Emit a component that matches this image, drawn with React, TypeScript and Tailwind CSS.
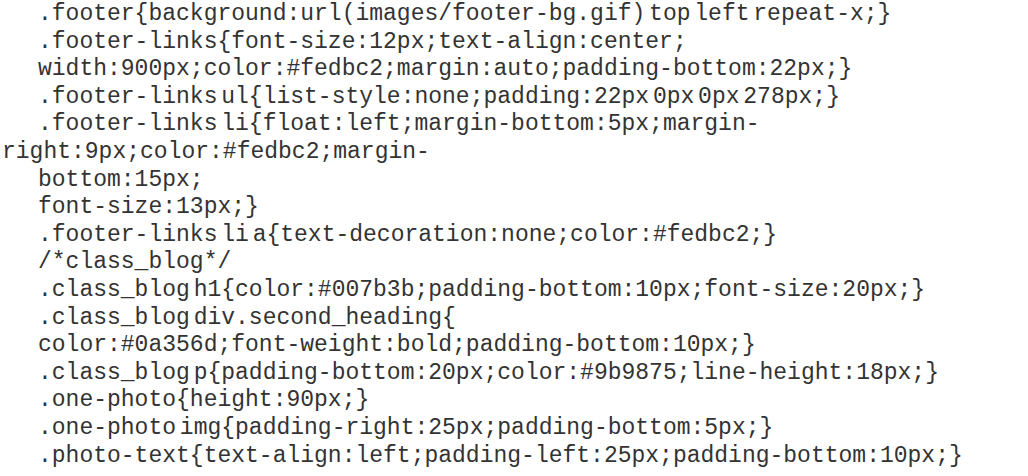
const lines: { text: string; indent?: boolean }[] = [
  { text: ".footer{background:url(images/footer-bg.gif) top left repeat-x;}" },
  { text: ".footer-links{font-size:12px;text-align:center;" },
  { text: "width:900px;color:#fedbc2;margin:auto;padding-bottom:22px;}" },
  { text: ".footer-links ul{list-style:none;padding:22px 0px 0px 278px;}" },
  { text: ".footer-links li{float:left;margin-bottom:5px;margin-" },
  { text: "right:9px;color:#fedbc2;margin-", indent: false },
  { text: "bottom:15px;" },
  { text: "font-size:13px;}" },
  { text: ".footer-links li a{text-decoration:none;color:#fedbc2;}" },
  { text: "/*class_blog*/" },
  { text: ".class_blog h1{color:#007b3b;padding-bottom:10px;font-size:20px;}" },
  { text: ".class_blog div.second_heading{" },
  { text: "color:#0a356d;font-weight:bold;padding-bottom:10px;}" },
  { text: ".class_blog p{padding-bottom:20px;color:#9b9875;line-height:18px;}" },
  { text: ".one-photo{height:90px;}" },
  { text: ".one-photo img{padding-right:25px;padding-bottom:5px;}" },
  { text: ".photo-text{text-align:left;padding-left:25px;padding-bottom:10px;}" },
];

export default function App() {
  return (
    <div className="w-[1028px] h-[476px] bg-white overflow-hidden">
      <div className="pt-[1px] font-['Liberation_Mono','Courier_New',monospace] text-[23px] leading-[27.6px] tracking-[0px] [word-spacing:-10px] text-[#333]">
        {lines.map((line, i) => (
          <div
            key={i}
            className={`whitespace-pre ${line.indent === false ? "pl-[2px]" : "pl-[38px]"}`}
          >
            {line.text}
          </div>
        ))}
      </div>
    </div>
  );
}
